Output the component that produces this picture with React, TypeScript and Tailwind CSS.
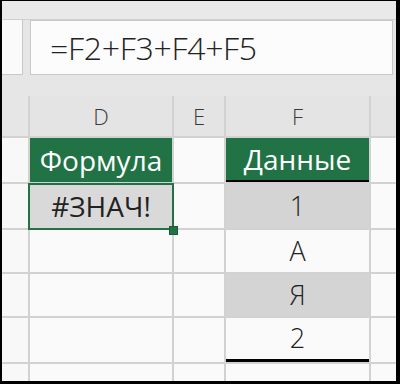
import React from 'react';

const font = { fontFamily: '"Open Sans", "Noto Sans", sans-serif' };

function Cell({ className = '', children }: { className?: string; children?: React.ReactNode }) {
  return <div className={`flex items-center justify-center ${className}`}>{children}</div>;
}

export default function App() {
  const values = [
    { v: '1', shade: true },
    { v: 'A', shade: false },
    { v: 'Я', shade: true },
    { v: '2', shade: false, last: true },
  ];

  return (
    <div className="w-[400px] h-[384px] bg-black pl-[2px] pt-px pr-[4px] pb-[3px]" style={font}>
      <div className="h-full flex flex-col bg-[#e6e6e6]">
        {/* Formula bar */}
        <div className="h-[19px] border-b border-[#d0d0d0] bg-[#e9e9e9]" />
        <div className="flex h-[55px] gap-[7px] pr-[3px]">
          <div className="w-[21px] bg-[#fafafa] border-b border-r border-[#c8c8c8]" />
          <div className="flex-1 bg-[#fcfcfc] border border-[#c8c8c8] flex items-center pl-[19px]">
            <span className="text-[32px] font-light text-[#222] tracking-[-0.3px]">=F2+F3+F4+F5</span>
          </div>
        </div>
        <div className="h-[21px]" />

        {/* Grid */}
        <div className="flex-1 grid grid-cols-[26px_142px_50px_143px_1fr] grid-rows-[40px_44px_44px_42px_42px_44px_1fr] gap-[2px] bg-[#d2d2d2]">
          {/* header row */}
          <div className="bg-[#e6e6e6]" />
          <Cell className="bg-[#e4e4e4] text-[22px] text-[#3a3a3a] font-light">D</Cell>
          <Cell className="bg-[#e4e4e4] text-[22px] text-[#3a3a3a] font-light">E</Cell>
          <Cell className="bg-[#e4e4e4] text-[22px] text-[#3a3a3a] font-light">F</Cell>
          <div className="bg-[#e4e4e4]" />

          {/* row 1 */}
          <div className="bg-[#f8f8f8]" />
          <Cell className="bg-[#217346] text-white text-[28px]">Формула</Cell>
          <div className="bg-[#fafafa]" />
          <Cell className="bg-[#217346] text-white text-[28px] border-b-[2px] border-black">Данные</Cell>
          <div className="bg-[#fafafa]" />

          {/* row 2 */}
          <div className="bg-[#f8f8f8]" />
          <div className="relative bg-[#d9d9d9] flex items-center justify-center text-[28px] text-[#222]">
            #ЗНАЧ!
            <div className="absolute -left-[2px] -right-[2px] -top-[1px] -bottom-[2px] border-2 border-[#217346]" />
            <div className="absolute -right-[6px] -bottom-[7px] w-[9px] h-[9px] bg-[#217346] border border-[#1a5c38]" />
          </div>
          <div className="bg-[#fafafa]" />
          <Cell className="bg-[#d4d4d4] text-[27px] text-[#222] font-light">{values[0].v}</Cell>
          <div className="bg-[#fafafa]" />

          {values.slice(1).map((r) => (
            <React.Fragment key={r.v}>
              <div className="bg-[#f8f8f8]" />
              <div className="bg-[#fafafa]" />
              <div className="bg-[#fafafa]" />
              <Cell
                className={`${r.shade ? 'bg-[#d4d4d4]' : 'bg-[#fafafa]'} ${
                  r.last ? 'border-b-[3px] border-black' : ''
                } text-[27px] text-[#222] font-light`}
              >
                {r.v}
              </Cell>
              <div className="bg-[#fafafa]" />
            </React.Fragment>
          ))}

          {/* last partial row */}
          <div className="bg-[#f8f8f8]" />
          <div className="bg-[#fafafa]" />
          <div className="bg-[#fafafa]" />
          <div className="bg-[#fafafa]" />
          <div className="bg-[#fafafa]" />
        </div>
      </div>
    </div>
  );
}
